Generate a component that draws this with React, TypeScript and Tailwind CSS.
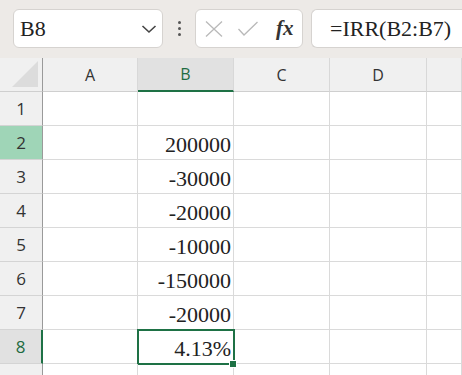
import React from 'react';

const cols = [
  { key: 'A', w: 'w-[95px]' },
  { key: 'B', w: 'w-[96px]' },
  { key: 'C', w: 'w-[96px]' },
  { key: 'D', w: 'w-[97px]' },
  { key: 'E', w: 'flex-1' },
];

const values: Record<number, string> = {
  2: '200000',
  3: '-30000',
  4: '-20000',
  5: '-10000',
  6: '-150000',
  7: '-20000',
  8: '4.13%',
};

const serif = "font-['Liberation_Serif','Times_New_Roman',serif]";
const sans = "font-['Open_Sans','Noto_Sans',sans-serif]";

export default function App() {
  const rows = [1, 2, 3, 4, 5, 6, 7, 8, 9];

  return (
    <div className="w-[462px] h-[375px] overflow-hidden bg-white">
      {/* Formula bar */}
      <div className="h-[58px] bg-[#edeae7] flex items-start pt-[9px] pl-[13px]">
        <div className="w-[150px] h-[39px] bg-white border border-[#d6d3d0] rounded-[6px] flex items-center pl-[6px] pr-[5px]">
          <span className={`${serif} text-[22px] text-[#222] flex-1`}>B8</span>
          <svg width="16" height="10" viewBox="0 0 16 10" className="mt-[1px]">
            <path d="M1.5 2 L8 8 L14.5 2" fill="none" stroke="#444" strokeWidth="1.6" />
          </svg>
        </div>
        <div className="w-[32px] h-[39px] flex flex-col items-center justify-center gap-[3px]">
          <span className="w-[3px] h-[3px] bg-[#555] rounded-full" />
          <span className="w-[3px] h-[3px] bg-[#555] rounded-full" />
          <span className="w-[3px] h-[3px] bg-[#555] rounded-full" />
        </div>
        <div className="w-[108px] h-[39px] bg-white border border-[#d6d3d0] rounded-[6px] flex items-center pl-[8px]">
          <svg width="20" height="18" viewBox="0 0 20 18">
            <path d="M2 1.5 L18 16.5 M18 1.5 L2 16.5" fill="none" stroke="#b9b9b9" strokeWidth="1.3" />
          </svg>
          <svg width="22" height="16" viewBox="0 0 22 16" className="ml-[13px]">
            <path d="M1.5 8 L7 14 L20.5 1" fill="none" stroke="#b9b9b9" strokeWidth="1.3" />
          </svg>
          <span className={`${serif} italic font-bold text-[21px] text-[#333] ml-[17px] leading-none`}>fx</span>
        </div>
        <div className="flex-1 h-[39px] ml-[8px] bg-white border border-[#d6d3d0] border-r-0 rounded-l-[6px] flex items-center pl-[18px]">
          <span className={`${serif} text-[22px] text-[#222] whitespace-nowrap`}>=IRR(B2:B7)</span>
        </div>
      </div>

      {/* Column headers */}
      <div className="flex h-[34px]">
        <div className="w-[43px] h-full bg-[#f0f0f0] border-r border-r-[#9a9a9a] border-b border-b-[#cfcfcf] flex items-end justify-end pr-[4px] pb-[4px]">
          <svg width="26" height="26" viewBox="0 0 26 26">
            <path d="M26 0 L26 26 L0 26 Z" fill="#dcdcdc" />
          </svg>
        </div>
        {cols.map((c) => {
          const sel = c.key === 'B';
          return (
            <div
              key={c.key}
              className={`${c.w} h-full border-r border-r-[#d8d8d8] flex items-center justify-center ${sans} text-[16px] ${
                sel
                  ? 'bg-[#e1e1e1] text-[#1e6b41] border-b-2 border-b-[#1e7145]'
                  : 'bg-[#f0f0f0] text-[#333] border-b border-b-[#cfcfcf]'
              }`}
            >
              {c.key !== 'E' ? c.key : ''}
            </div>
          );
        })}
      </div>

      {/* Rows */}
      {rows.map((r) => (
        <div key={r} className="flex h-[34px]">
          <div
            className={`w-[43px] h-full border-b border-b-[#d4d4d4] flex items-center justify-center ${sans} text-[17px] ${
              r === 2
                ? 'bg-[#9fd5b7] text-[#333] border-r border-r-[#9a9a9a]'
                : r === 8
                ? 'bg-[#e1e1e1] text-[#1e6b41] border-r-2 border-r-[#1e7145]'
                : 'bg-[#f0f0f0] text-[#333] border-r border-r-[#9a9a9a]'
            }`}
          >
            {r < 9 ? r : ''}
          </div>
          {cols.map((c) => {
            const active = c.key === 'B' && r === 8;
            return (
              <div
                key={c.key}
                className={`${c.w} h-full relative border-r border-b border-[#dadada] flex items-end justify-end pr-[2px] pb-[1px] ${serif} text-[22px] leading-[26px] text-[#222]`}
              >
                {c.key === 'B' ? values[r] ?? '' : ''}
                {active && (
                  <>
                    <div className="absolute left-[-1px] top-[-1px] right-[-2px] bottom-[-2px] border-2 border-[#1e7145]" />
                    <div className="absolute z-10 right-[-4px] bottom-[-5px] w-[8px] h-[8px] bg-[#1e7145] border border-white" />
                  </>
                )}
              </div>
            );
          })}
        </div>
      ))}
    </div>
  );
}
